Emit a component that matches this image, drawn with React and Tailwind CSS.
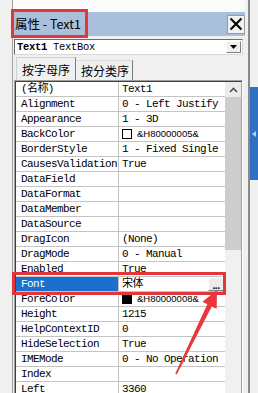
import React from 'react'

const PROPS = [
  { name: '(名称)', value: 'Text1' },
  { name: 'Alignment', value: '0 - Left Justify' },
  { name: 'Appearance', value: '1 - 3D' },
  { name: 'BackColor', value: '&H80000005&', swatch: 'white' },
  { name: 'BorderStyle', value: '1 - Fixed Single' },
  { name: 'CausesValidation', value: 'True' },
  { name: 'DataField', value: '' },
  { name: 'DataFormat', value: '' },
  { name: 'DataMember', value: '' },
  { name: 'DataSource', value: '' },
  { name: 'DragIcon', value: '(None)' },
  { name: 'DragMode', value: '0 - Manual' },
  { name: 'Enabled', value: 'True' },
  { name: 'Font', value: '宋体', selected: true },
  { name: 'ForeColor', value: '&H80000008&', swatch: 'black' },
  { name: 'Height', value: '1215' },
  { name: 'HelpContextID', value: '0' },
  { name: 'HideSelection', value: 'True' },
  { name: 'IMEMode', value: '0 - No Operation' },
  { name: 'Index', value: '' },
  { name: 'Left', value: '3360' },
]

export default function App() {
  return (
    <div className="relative w-[258px] h-[393px] overflow-hidden bg-[#f0f0f0] flex text-black">
      <div className="w-[12px] shrink-0" />

      {/* properties window */}
      <div className="w-[236px] shrink-0 border-l border-[#a0a0a0] flex flex-col pr-[3px]">
        <div className="h-[12px] shrink-0 bg-[#fbfbfb]" />

        {/* title bar */}
        <div className="h-[24px] shrink-0 bg-[#a9bfda] flex items-center justify-between">
          <span className="pl-[2px] text-[12.5px] leading-none font-['Noto_Sans_CJK_SC',sans-serif]">属性 - Text1</span>
          <div className="w-[18px] h-[19px] bg-[#f2f2f2] border border-[#9a9a9a] flex items-center justify-center">
            <svg width="14" height="14" viewBox="0 0 14 14">
              <path d="M1.5 1.5 L12.5 12.5 M12.5 1.5 L1.5 12.5" stroke="#000" strokeWidth="2" />
            </svg>
          </div>
        </div>

        {/* object combo */}
        <div className="mt-[3px] ml-[1px] w-[229px] h-[16px] shrink-0 bg-white border border-[#6e6e6e] border-r-[#d8d8d8] border-b-[#d8d8d8] flex items-center justify-between">
          <span className="pl-[2px] text-[10.5px] leading-none whitespace-nowrap font-['Liberation_Mono',monospace] tracking-[-0.3px]">
            <b>Text1</b> TextBox
          </span>
          <div className="w-[15px] h-[12px] mr-[1px] bg-[#f0f0f0] border border-white border-r-[#808080] border-b-[#808080] flex items-center justify-center">
            <svg width="7" height="4" viewBox="0 0 7 4"><path d="M0 0 H7 L3.5 4 Z" fill="#000" /></svg>
          </div>
        </div>

        {/* tabs */}
        <div className="h-[25px] shrink-0 flex items-end pl-[3px] font-['Noto_Sans_CJK_SC',sans-serif] text-[12px] leading-none">
          <div className="w-[60px] h-[23px] border-l border-t border-[#cfcfcf] border-r-[#7a7a7a] border-r flex items-center justify-center pt-[2px]">按字母序</div>
          <div className="w-[57px] h-[20px] border-t border-r border-[#d8d8d8] border-r-[#7a7a7a] flex items-center justify-center pl-[2px]">按分类序</div>
        </div>

        {/* property grid */}
        <div className="ml-[1px] w-[229px] flex-1 border-l border-t border-r border-[#a0a0a0] border-r-white">
          <div className="h-full border-l border-t border-r border-[#404040] border-r-[#a0a0a0] flex">
            <div className="w-[209px] shrink-0 bg-white">
              {PROPS.map(p => <PropRow key={p.name} p={p} />)}
            </div>
            <div className="w-[16px] shrink-0 flex flex-col">
              <div className="h-[15px] bg-[#ebebeb] flex items-center justify-center">
                <svg width="9" height="6" viewBox="0 0 9 6"><path d="M1 5 L4.5 1.5 L8 5" stroke="#505050" strokeWidth="1.6" fill="none" /></svg>
              </div>
              <div className="h-[153px] bg-[#cdcdcd]" />
              <div className="flex-1 bg-[#f0f0f0]" />
            </div>
          </div>
        </div>
      </div>

      <div className="w-[2px] shrink-0 bg-[#8a8a8a]" />
      <div className="flex-1 pt-[87px]">
        <div className="h-[93px] bg-[#2f70c3] flex items-center justify-center">
          <svg width="4" height="6" viewBox="0 0 4 6"><path d="M4 0 V6 L0 3 Z" fill="#b9cfee" /></svg>
        </div>
      </div>

      {/* red highlight boxes and arrow */}
      <div className="absolute left-[11px] top-[9px] w-[77px] h-[29px] border-[3px] border-[#e3363b]" />
      <div className="absolute left-[12px] top-[272px] w-[214px] h-[23px] border-[3px] border-[#e3363b]" />
      <svg className="absolute left-0 top-0 pointer-events-none" width="258" height="393" viewBox="0 0 258 393">
        <polygon
          points="217,290 216.7,308.8 211.8,306.4 176.7,374.4 175.3,373.6 207.3,304.2 202.4,301.8"
          fill="#e8383d"
        />
      </svg>
    </div>
  )
}

function PropRow({ p }) {
  return (
    <div className="h-[15px] flex border-b border-[#c4c4c4] text-[11px] leading-[14px] font-['Liberation_Mono','Noto_Sans_CJK_SC',monospace] tracking-[-0.6px] whitespace-nowrap">
      <div className={`w-[103px] shrink-0 pl-[5px] overflow-hidden border-r border-[#c4c4c4] ${p.selected ? 'bg-[#1a6fcf] text-white' : ''}`}>
        {p.name}
      </div>
      <div className="flex-1 min-w-0 pl-[3px] flex items-start overflow-hidden">
        {p.swatch && (
          <span className="mt-[2px] mr-[5px] shrink-0">
            <span className={`block w-[10px] h-[10px] border border-black ${p.swatch === 'black' ? 'bg-black' : 'bg-white'}`} />
          </span>
        )}
        {p.swatch ? (
          <span className="text-[9.5px] tracking-normal font-['Liberation_Sans',sans-serif]">{p.value}</span>
        ) : (
          <span>{p.value}</span>
        )}
        {p.selected && (
          <span className="ml-auto mr-[1px] w-[16px] h-[14px] bg-[#ececec] border border-white border-r-[#808080] border-b-[#808080] flex items-end justify-center text-[10px] leading-[9px] font-bold tracking-[-0.5px] font-['Liberation_Sans',sans-serif]">...</span>
        )}
      </div>
    </div>
  )
}
